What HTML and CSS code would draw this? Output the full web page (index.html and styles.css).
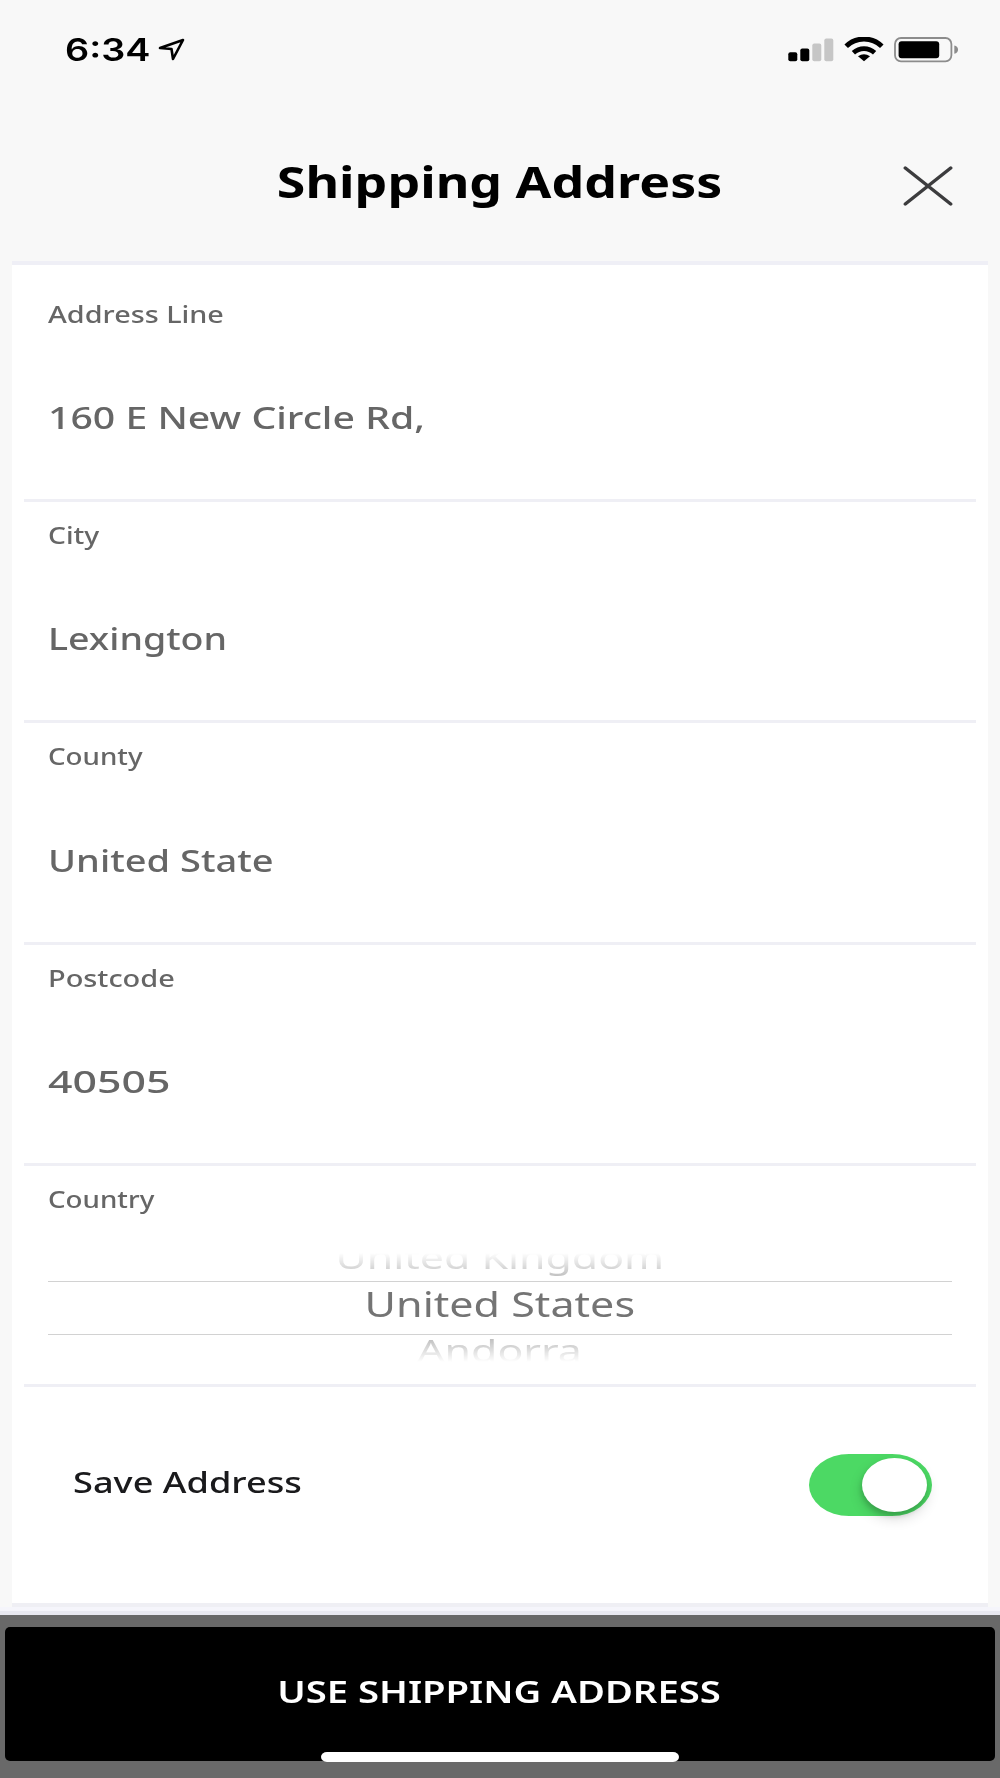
FILE: index.html
```html
<!DOCTYPE html>
<html lang="en">
<head>
<meta charset="utf-8">
<title>Shipping Address</title>
<link rel="stylesheet" href="styles.css">
</head>
<body>
<div class="screen">
  <div class="status">
    <span class="time wide">6:34</span>
    <svg class="location" width="28" height="24" viewBox="0 0 28 24"><path d="M2 10 25 2 15 21 13.5 11Z" fill="none" stroke="#000" stroke-width="2.6" stroke-linejoin="round"/></svg>
    <svg class="signal" width="46" height="24" viewBox="0 0 46 24">
      <rect x="0.3" y="14.3" width="9" height="9" rx="2"/><rect x="12.3" y="10.6" width="9" height="12.7" rx="2"/>
      <g fill="#c6c6c6"><rect x="24.3" y="5.6" width="9" height="17.7" rx="2"/><rect x="36.3" y="0.6" width="9" height="22.7" rx="2"/></g>
    </svg>
    <svg class="wifi" width="42" height="26" viewBox="0 0 42 26">
      <path d="M3.2 9.3C13-.4 29-.4 38.8 9.3" fill="none" stroke="#000" stroke-width="5"/>
      <path d="M10.4 15.8C16.5 10.2 25.5 10.2 31.6 15.8" fill="none" stroke="#000" stroke-width="4.8"/>
      <path d="M15 19.3Q21 15.2 27 19.3L21 24.3Z"/>
    </svg>
    <svg class="battery" width="66" height="26" viewBox="0 0 66 26">
      <rect x="1" y="1" width="56.4" height="23.3" rx="6" fill="none" stroke="#8c8c8c" stroke-width="1.8"/>
      <rect x="4.6" y="4.2" width="40.6" height="17" rx="3"/>
      <path d="M60.3 8.4C65.3 9.4 65.3 15.8 60.3 16.8Z" fill="#8c8c8c"/>
    </svg>
  </div>
  <div class="header">
    <h1 class="title"><span class="wide">Shipping Address</span></h1>
    <svg class="close" width="50" height="40" viewBox="0 0 50 40"><path d="M2.3 2 47.7 38M47.7 2 2.3 38" stroke="#3c3c3e" stroke-width="3.5" stroke-linecap="round"/></svg>
  </div>
  <div class="card">
    <div class="row"><div class="label"><span class="wide line">Address Line</span></div><div class="value"><span class="wide street">160 E New Circle Rd,</span></div></div>
    <div class="row"><div class="label"><span class="wide">City</span></div><div class="value"><span class="wide town">Lexington</span></div></div>
    <div class="row"><div class="label"><span class="wide county">County</span></div><div class="value"><span class="wide state">United State</span></div></div>
    <div class="row"><div class="label"><span class="wide post">Postcode</span></div><div class="value"><span class="wide digits">40505</span></div></div>
    <div class="row">
      <div class="label"><span class="wide county">Country</span></div>
      <div class="picker">
        <div class="option before"><span class="wide">United Kingdom</span></div>
        <div class="option current"><span class="wide">United States</span></div>
        <div class="option after"><span class="wide">Andorra</span></div>
      </div>
    </div>
    <div class="save"><span class="save-text wide">Save Address</span><span class="toggle"><span class="knob"></span></span></div>
  </div>
  <div class="gap"></div>
  <div class="footer"><div class="button"><span class="wide">USE SHIPPING ADDRESS</span></div><div class="home"></div></div>
</div>
</body>
</html>
```
FILE: styles.css
```css
* { box-sizing: border-box; }
body { margin: 0; background: #f8f8f8; font-family: "Noto Sans", sans-serif; color: #666; }
.screen { width: 1000px; height: 1778px; display: flex; flex-direction: column; overflow: hidden; }
.screen svg { display: block; flex: none; }
.wide { display: inline-block; white-space: nowrap; transform: scaleX(1.2); transform-origin: 0 50%; }

.status { height: 98px; display: flex; align-items: center; padding: 1px 40px 0 65px; }
.time { width: 93px; font: 600 31px/40px Inter, sans-serif; color: #000; transform: scaleX(1.22); }
.location { margin: 0 auto 0 0; }
.signal { margin-right: 9px; }
.wifi { margin-right: 9px; }

.header { height: 163px; display: grid; grid-template-columns: 96px 1fr 96px; align-items: center; padding-top: 5px; }
.title { grid-column: 2; margin: 0; text-align: center; font-size: 42.5px; line-height: 58px; font-weight: 700; color: #000; }
.title .wide { transform: scaleX(1.22); transform-origin: 50% 50%; }
.close { margin: 7px 0 0 -1.5px; }

.card { margin: 0 12px; height: 1346px; background: #fff; border-top: 4px solid #efeff6; border-bottom: 4px solid #efeff4; padding: 16px 12px 0; }
.row { height: 221.2px; border-bottom: 3px solid #efeff5; padding: 15px 24px 0 24px; }
.label { height: 36px; font-size: 23.5px; line-height: 36px; font-weight: 500; }
.value { height: 48px; margin-top: 61.3px; font-size: 31.5px; line-height: 48px; font-weight: 500; }
.line { transform: scaleX(1.225); }
.street { transform: scaleX(1.244); }
.town { transform: scaleX(1.192); }
.state { transform: scaleX(1.207); }
.county { transform: scaleX(1.18); }
.post { transform: scaleX(1.23); }
.digits { transform: scaleX(1.36); }

.picker { margin-top: 36.5px; text-align: center; }
.picker .wide { transform: scaleX(1.36); transform-origin: 50% 50%; }
.option { overflow: hidden; height: 27.5px; font-size: 31.5px; color: #bcbcbc; font-weight: 370; }
.before { line-height: 7.5px; -webkit-mask-image: linear-gradient(transparent 0, #000 90%); mask-image: linear-gradient(transparent 0, #000 90%); }
.after { line-height: 29px; -webkit-mask-image: linear-gradient(#000 10%, transparent 100%); mask-image: linear-gradient(#000 10%, transparent 100%); }
.current { height: 54px; border-top: 1.5px solid #d2d2d2; border-bottom: 1.5px solid #d2d2d2; font-size: 34px; line-height: 44px; color: #747474; font-weight: 400; }
.picker .current .wide { transform: scaleX(1.266); }

.save { height: 196px; display: flex; align-items: center; justify-content: space-between; padding: 0 44px 0 48.5px; }
.save-text { padding-bottom: 6px; font-size: 29px; font-weight: 500; color: #1a1a1c; transform: scaleX(1.247); }
.toggle { width: 123px; height: 62px; padding: 4px 5px; display: flex; justify-content: flex-end; border-radius: 40px / 31px; background: #4cd964; }
.knob { width: 65px; height: 54px; border-radius: 50%; background: #fff; box-shadow: 0 6px 14px rgba(0, 0, 0, .16), -1px 4px 5px rgba(0, 0, 0, .14); }

.gap { height: 8px; background: #f5f5fb; border-bottom: 4px solid #e9e9f1; }
.footer { flex: 1; background: #696969; padding: 12px 5px 0; }
.button { height: 134px; border-radius: 5px; background: #000; display: flex; align-items: center; justify-content: center; padding: 0 1px 7px 0; color: #fff; font-size: 30.5px; line-height: 42px; font-weight: 600; }
.button .wide { transform: scaleX(1.253); transform-origin: 50% 50%; }
.home { width: 358px; height: 10px; margin: -9px auto 0; position: relative; border-radius: 6px / 5px; background: #fff; }
```
